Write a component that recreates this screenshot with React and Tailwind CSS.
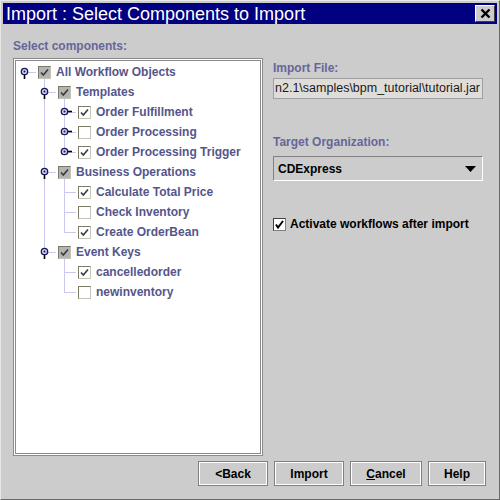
import React from "react";

const rows = [
  { d: 0, t: "All Workflow Objects", c: "gray", h: "exp" },
  { d: 1, t: "Templates", c: "gray", h: "exp" },
  { d: 2, t: "Order Fulfillment", c: "on", h: "col" },
  { d: 2, t: "Order Processing", c: "off", h: "col" },
  { d: 2, t: "Order Processing Trigger", c: "on", h: "col" },
  { d: 1, t: "Business Operations", c: "gray", h: "exp" },
  { d: 2, t: "Calculate Total Price", c: "on" },
  { d: 2, t: "Check Inventory", c: "off" },
  { d: 2, t: "Create OrderBean", c: "on" },
  { d: 1, t: "Event Keys", c: "gray", h: "exp" },
  { d: 2, t: "cancelledorder", c: "on" },
  { d: 2, t: "newinventory", c: "off" },
];

const padByDepth = { 0: "pl-[22px]", 1: "pl-[42px]", 2: "pl-[62px]" };

function TreeCheck({ state }) {
  const bg = state === "gray" ? "bg-[#b4b4b4]" : "bg-white";
  return (
    <div
      className={`w-[13px] h-[13px] shrink-0 border border-t-[#7a7a66] border-l-[#7a7a66] border-b-[#c4c4b8] border-r-[#c4c4b8] ${bg} flex items-center justify-center`}
    >
      {state !== "off" && (
        <svg width="11" height="11" viewBox="0 0 11 11">
          <polyline points="2,5.5 4.3,8 9,2.5" fill="none" stroke="#3a3a3a" strokeWidth="1.6" />
        </svg>
      )}
    </div>
  );
}

function TreeLines() {
  const lines = [];
  const handles = [];
  rows.forEach((r, i) => {
    const cy = 10 + 20 * i;
    const hx = 8 + 20 * r.d;
    lines.push(
      <line key={"h" + i} x1={hx} y1={cy + 0.5} x2={hx + 12} y2={cy + 0.5} stroke="#c8c8f0" strokeWidth="1" />
    );
    if (r.h === "exp") {
      handles.push(
        <g key={"k" + i}>
          <line x1={hx + 0.5} y1={cy + 2} x2={hx + 0.5} y2={cy + 7} stroke="#000000" strokeWidth="1.6" />
          <circle cx={hx + 0.5} cy={cy - 0.5} r="3.2" fill="#c8c8f8" stroke="#1a1a4a" strokeWidth="1.3" />
          <circle cx={hx + 0.5} cy={cy - 0.5} r="1" fill="#1a1a4a" />
        </g>
      );
    } else if (r.h === "col") {
      handles.push(
        <g key={"k" + i}>
          <line x1={hx + 2.5} y1={cy - 0.5} x2={hx + 8} y2={cy - 0.5} stroke="#000000" strokeWidth="1.6" />
          <circle cx={hx + 0.5} cy={cy - 0.5} r="3.2" fill="#c8c8f8" stroke="#1a1a4a" strokeWidth="1.3" />
          <circle cx={hx + 0.5} cy={cy - 0.5} r="1" fill="#1a1a4a" />
        </g>
      );
    }
  });
  return (
    <svg className="absolute left-0 top-[1px]" width="244" height="391">
      <line x1="28.5" y1="10" x2="28.5" y2="190" stroke="#c8c8f0" strokeWidth="1" />
      <line x1="48.5" y1="30" x2="48.5" y2="90" stroke="#c8c8f0" strokeWidth="1" />
      <line x1="48.5" y1="110" x2="48.5" y2="170" stroke="#c8c8f0" strokeWidth="1" />
      <line x1="48.5" y1="190" x2="48.5" y2="230" stroke="#c8c8f0" strokeWidth="1" />
      {lines}
      {handles}
    </svg>
  );
}

function Btn({ children, w }) {
  return (
    <div
      className={`${w} h-[25px] border border-[#808080] shadow-[inset_0_0_0_1px_#ffffff] flex items-center justify-center text-[12px] font-bold text-black`}
    >
      {children}
    </div>
  );
}

export default function App() {
  return (
    <div
      className="w-[500px] h-[500px] bg-[#cccccc] border border-t-[#e8e8e8] border-l-[#e8e8e8] border-r-[#6a6a6a] border-b-[#6a6a6a] p-[2px] flex flex-col"
      style={{ fontFamily: '"Liberation Sans", Arial, sans-serif' }}
    >
      {/* title bar */}
      <div className="h-[21px] bg-[#000080] flex items-start shrink-0 overflow-hidden">
        <span className="pl-[3px] text-[18px] leading-[23px] text-white whitespace-nowrap">
          Import : Select Components to Import
        </span>
        <div className="ml-auto mr-[2px] mt-[2px] w-[20px] h-[17px] bg-[#cccccc] border border-t-white border-l-white border-r-[#404040] border-b-[#404040] flex items-center justify-center">
          <svg width="11" height="11" viewBox="0 0 11 11">
            <line x1="1.5" y1="1.5" x2="9.5" y2="9.5" stroke="#000" strokeWidth="2.4" />
            <line x1="9.5" y1="1.5" x2="1.5" y2="9.5" stroke="#000" strokeWidth="2.4" />
          </svg>
        </div>
      </div>

      {/* content */}
      <div className="flex flex-col flex-1">
        <div className="flex pl-[10px] gap-[10px]">
          {/* left column */}
          <div className="w-[250px] flex flex-col">
            <div className="mt-[15px] h-[14px] leading-[14px] text-[12px] font-bold text-[#666699]">
              Select components:
            </div>
            <div className="mt-[5px] h-[398px] border border-[#8a8a8a] p-px bg-white">
              <div className="h-full border border-[#8a8a8a] bg-white relative">
                <TreeLines />
                <div className="relative flex flex-col pt-[1px]">
                  {rows.map((r, i) => (
                    <div key={i} className={`h-[20px] flex items-center gap-[5px] ${padByDepth[r.d]}`}>
                      <TreeCheck state={r.c} />
                      <span className="text-[12px] font-bold text-[#55558a] whitespace-nowrap leading-[14px]">
                        {r.t}
                      </span>
                    </div>
                  ))}
                </div>
              </div>
            </div>
          </div>

          {/* right column */}
          <div className="w-[210px] flex flex-col">
            <div className="mt-[37px] h-[14px] leading-[14px] text-[12px] font-bold text-[#666699]">Import File:</div>
            <div className="mt-[3px] h-[21px] border border-[#a0a0a0] bg-[#e0ddd8] flex items-center justify-end overflow-hidden pr-[2px]">
              <span className="text-[12.5px] text-[#1a1a1a] whitespace-nowrap">
                n2.1\samples\bpm_tutorial\tutorial.jar
              </span>
            </div>
            <div className="mt-[36px] h-[14px] leading-[14px] text-[12px] font-bold text-[#666699]">
              Target Organization:
            </div>
            <div className="mt-[7px] h-[25px] border border-t-[#808080] border-l-[#808080] border-r-white border-b-white bg-[#cccccc] flex items-center pl-[4px] pr-[6px]">
              <span className="text-[12px] font-bold text-black">CDExpress</span>
              <svg className="ml-auto" width="11" height="6" viewBox="0 0 11 6">
                <polygon points="0,0 11,0 5.5,6" fill="#000" />
              </svg>
            </div>
            <div className="mt-[36px] h-[14px] flex items-center gap-[4px]">
              <div className="w-[13px] h-[13px] border border-t-[#404040] border-l-[#404040] border-r-[#808080] border-b-[#808080] bg-white flex items-center justify-center">
                <svg width="11" height="11" viewBox="0 0 11 11">
                  <polyline points="2,5.5 4,8.5 9,2" fill="none" stroke="#000" strokeWidth="2" />
                </svg>
              </div>
              <span className="text-[12px] font-bold text-black whitespace-nowrap">
                Activate workflows after import
              </span>
            </div>
          </div>
        </div>

        {/* buttons */}
        <div className="mt-[5px] flex justify-end gap-[6px] pr-[11px]">
          <Btn w="w-[70px]">&lt;Back</Btn>
          <Btn w="w-[70px]">Import</Btn>
          <Btn w="w-[72px]">
            <span>
              <span className="underline">C</span>ancel
            </span>
          </Btn>
          <Btn w="w-[58px]">Help</Btn>
        </div>
      </div>
    </div>
  );
}
